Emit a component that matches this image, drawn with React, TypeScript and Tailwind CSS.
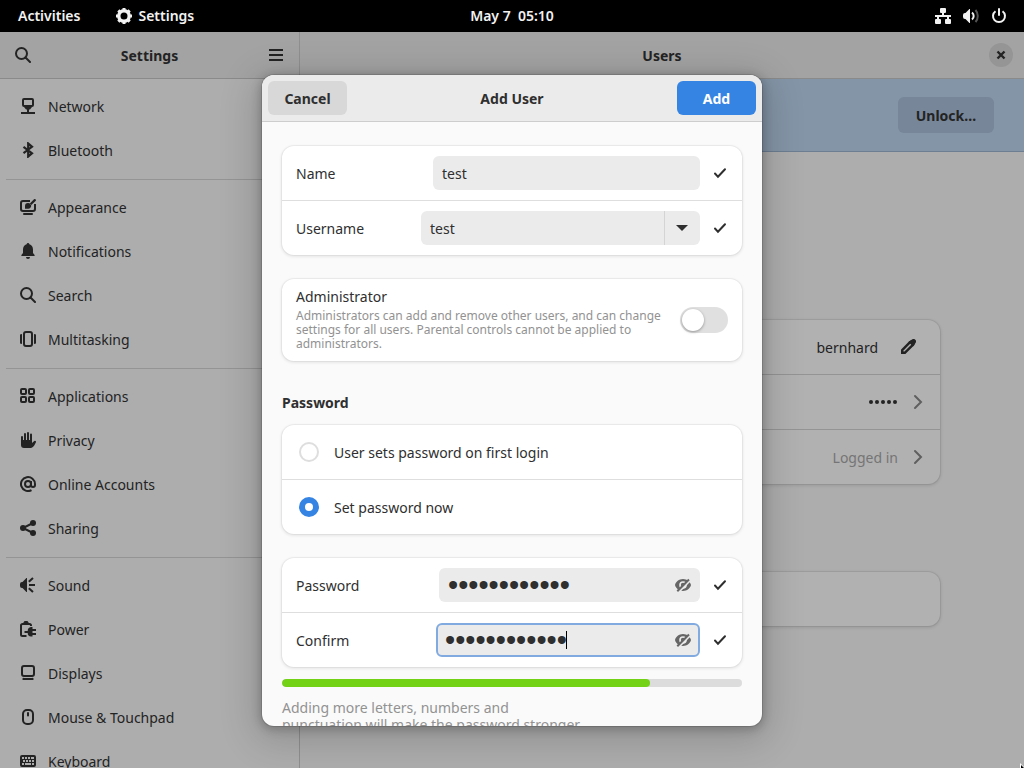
import type { ReactNode } from "react";

type IconProps = { children: ReactNode; className?: string };

function Icon({ children, className = "" }: IconProps) {
  return (
    <svg viewBox="0 0 16 16" width="16" height="16" fill="currentColor" aria-hidden="true" className={"shrink-0 " + className}>
      {children}
    </svg>
  );
}

const stroke = { fill: "none", stroke: "currentColor", strokeWidth: 2 } as const;

const NetworkIcon = () => (
  <Icon>
    <rect x="3" y="1" width="10" height="7" rx="1" {...stroke} />
    <path d="M4 9h8l-2 2.500H9V14h6v2H1v-2h6v-2.500H6z" />
  </Icon>
);
const BluetoothIcon = () => (
  <Icon>
    <path d="M3.500 4.800 12 11.200 8.200 14.500V1.500L12 4.800 3.500 11.200" fill="none" stroke="currentColor" strokeWidth="2.200" />
  </Icon>
);
const AppearanceIcon = () => (
  <Icon>
    <path d="M10 2H3a2 2 0 0 0-2 2v6a2 2 0 0 0 2 2h10a2 2 0 0 0 2-2V5" {...stroke} />
    <rect x="3" y="14" width="10" height="2" rx="1" />
    <path d="M5 9.500V7a3 3 0 0 1 3-3l1.500.3 1.700 2A3 3 0 0 1 8 9.700H5z" />
    <path d="M9.800 4.500 14 .3A1.200 1.200 0 0 1 15.800 1.800L11.300 6z" />
  </Icon>
);
const BellIcon = () => (
  <Icon>
    <path d="M8 0a1.500 1.500 0 0 1 1.400 1.200C11.800 2 13 3.900 13 6.500V10l1.600 2v1H1.400v-1L3 10V6.500C3 3.900 4.200 2 6.600 1.200A1.500 1.500 0 0 1 8 0z" />
    <path d="M6 14h4a2 2 0 0 1-4 0z" />
  </Icon>
);
const SearchIcon = () => (
  <Icon>
    <circle cx="6.500" cy="6.500" r="5.500" {...stroke} />
    <path d="m10.500 10.500 4.500 4.500" {...stroke} strokeLinecap="round" />
  </Icon>
);
const MultitaskingIcon = () => (
  <Icon>
    <rect x="4" y="1" width="8" height="14" rx="2" {...stroke} />
    <path d="M0 3.500 2 3v10l-2-.5zM16 3.500 14 3v10l2-.5z" />
  </Icon>
);
const ApplicationsIcon = () => (
  <Icon>
    <g {...stroke}>
      <rect x="1" y="1" width="5" height="5" rx="1" />
      <rect x="9" y="1" width="5" height="5" rx="1" />
      <rect x="1" y="9" width="5" height="5" rx="1" />
      <rect x="9" y="9" width="5" height="5" rx="1" />
    </g>
  </Icon>
);
const HandIcon = () => (
  <Icon>
    <path d="M1 5a1 1 0 0 1 2 0v3h1V2a1 1 0 0 1 2 0v6h1V1a1 1 0 0 1 2 0v7h1V2.500a1 1 0 0 1 2 0V11l2.300-1.900a1 1 0 0 1 1.500 1.300C14.500 13 13.300 16 10 16H4a3 3 0 0 1-3-3z" />
  </Icon>
);
const AtIcon = () => (
  <Icon>
    <circle cx="8" cy="8" r="3" {...stroke} />
    <path d="M11 5v4a2 2 0 0 0 4 0V8a7 7 0 1 0-3.500 6.100" {...stroke} />
  </Icon>
);
const ShareIcon = () => (
  <Icon>
    <circle cx="3" cy="8" r="3" />
    <circle cx="13" cy="3" r="3" />
    <circle cx="13" cy="13" r="3" />
    <path d="M13 3 3 8l10 5" {...stroke} />
  </Icon>
);
const SoundIcon = () => (
  <Icon>
    <path d="M7 1v14h-.600L2.500 11H2a2 2 0 0 1-2-2V7a2 2 0 0 1 2-2h.500l3.900-4z" />
    <path d="M9 8h6M8.800 4.800 13 .900M8.800 11.200 13 15.100" {...stroke} />
  </Icon>
);
const PowerSettingsIcon = () => (
  <Icon>
    <path d="M6.500 15H2.500A1.500 1.500 0 0 1 1 13.500v-9A1.500 1.500 0 0 1 2.500 3h7A1.500 1.500 0 0 1 11 4.500V5" {...stroke} />
    <path d="M3.500 2.500V1.500L4.500 0h3l1 1.500v1z" />
    <path d="M12.500 6v9.500H11A3.500 3.500 0 0 1 7.700 12H4.500v-2h3.200A4 4 0 0 1 11 6zM12.500 8H16v2h-3.500zM12.500 12H16v2h-3.500z" />
  </Icon>
);
const DisplayIcon = () => (
  <Icon>
    <rect x="2" y="1" width="12" height="10" rx="2" {...stroke} />
    <path d="M4 13h8a1 1 0 0 1 1 2H3a1 1 0 0 1 1-2z" />
  </Icon>
);
const MouseIcon = () => (
  <Icon>
    <rect x="3" y="1" width="10" height="14" rx="4" {...stroke} />
    <path d="M8 4v2.500" {...stroke} strokeLinecap="round" />
  </Icon>
);
const KeyboardIcon = () => (
  <Icon>
    <path
      fillRule="evenodd"
      d="M2 2h12a2 2 0 0 1 2 2v8a2 2 0 0 1-2 2H2a2 2 0 0 1-2-2V4a2 2 0 0 1 2-2zM2 4v2h2V4zM5 4v2h2V4zM8 4v2h2V4zM11 4v2h3V4zM3 7v2h2V7zM6 7v2h2V7zM9 7v2h2V7zM12 7v2h2V7zM2 10v2h2v-2zM5 10v2h6v-2zM12 10v2h2v-2z"
    />
  </Icon>
);
const GearIcon = () => (
  <Icon>
    <circle cx="8" cy="8" r="5.200" fill="none" stroke="currentColor" strokeWidth="3.400" />
    <path
      d="M8 0v3M8 13v3M0 8h3M13 8h3M2.340 2.340l2 2M11.660 11.660l2 2M13.660 2.340l-2 2M4.340 11.660l-2 2"
      fill="none"
      stroke="currentColor"
      strokeWidth="3"
    />
  </Icon>
);
const WiredIcon = () => (
  <Icon>
    <rect x="5" y="0" width="6" height="5" rx="1" />
    <rect x="0" y="11" width="6" height="5" rx="1" />
    <rect x="10" y="11" width="6" height="5" rx="1" />
    <path d="M8 4v4M3 12V8M13 12V8M0 8h16" {...stroke} />
  </Icon>
);
const VolumeIcon = () => (
  <Icon>
    <path d="M7 1v14h-.600L2.500 11H2a2 2 0 0 1-2-2V7a2 2 0 0 1 2-2h.500l3.900-4z" />
    <path d="M9 4.500a4.500 4.500 0 0 1 0 7" {...stroke} />
    <path d="M12.500 2a9 9 0 0 1 0 12" {...stroke} opacity="0.350" />
  </Icon>
);
const PowerIcon = () => (
  <Icon>
    <path d="M4.500 3.200a6 6 0 1 0 7 0" {...stroke} />
    <path d="M8 1v6" {...stroke} strokeLinecap="round" />
  </Icon>
);
const CheckIcon = () => (
  <Icon>
    <path d="m3 8.500 3 3.300 7-7.500" {...stroke} strokeLinecap="round" />
  </Icon>
);
const PencilIcon = () => (
  <Icon>
    <path d="M2.200 13.800v-2.600l8.100-8.300a2 2 0 0 1 2.800 2.800L4.800 13.800z" {...stroke} strokeWidth={2.4} strokeLinejoin="round" />
    <path d="m8.500 3 3.500-2.500a2.500 2.500 0 0 1 3.500 3.500L13 7.500zM1 10.500l4.500 4.500H1z" />
  </Icon>
);
const ChevronIcon = () => (
  <Icon className="text-[#5f5f5f]">
    <path d="m5 2 6 6-6 6" {...stroke} strokeLinecap="round" />
  </Icon>
);
const HiddenIcon = () => (
  <Icon>
    <path
      fillRule="evenodd"
      d="M8 2c4 0 7.300 2.900 8 6-.700 3.100-4 6-8 6S.7 11.100 0 8c.700-3.100 4-6 8-6zM8 4.200a3.800 3.800 0 1 0 0 7.600 3.800 3.800 0 0 0 0-7.600z"
    />
    <circle cx="8" cy="8" r="2.200" />
    <path d="M3.600 14.400 15 3" fill="none" stroke="#ebebeb" strokeWidth="3" />
    <path d="M2.300 14.200 14 2.500" {...stroke} />
  </Icon>
);

const groups = [
  [
    { label: "Network", Glyph: NetworkIcon },
    { label: "Bluetooth", Glyph: BluetoothIcon },
  ],
  [
    { label: "Appearance", Glyph: AppearanceIcon },
    { label: "Notifications", Glyph: BellIcon },
    { label: "Search", Glyph: SearchIcon },
    { label: "Multitasking", Glyph: MultitaskingIcon },
  ],
  [
    { label: "Applications", Glyph: ApplicationsIcon },
    { label: "Privacy", Glyph: HandIcon },
    { label: "Online Accounts", Glyph: AtIcon },
    { label: "Sharing", Glyph: ShareIcon },
  ],
  [
    { label: "Sound", Glyph: SoundIcon },
    { label: "Power", Glyph: PowerSettingsIcon },
    { label: "Displays", Glyph: DisplayIcon },
    { label: "Mouse & Touchpad", Glyph: MouseIcon },
    { label: "Keyboard", Glyph: KeyboardIcon },
  ],
];

function TopBar() {
  return (
    <header className="grid h-8 shrink-0 grid-cols-3 items-center bg-black pb-px font-semibold text-[#f2f2f2]">
      <div className="flex items-center gap-9 pl-[18px]">
        <button type="button">Activities</button>
        <button type="button" className="flex items-center gap-1.5">
          <GearIcon />
          Settings
        </button>
      </div>
      <button type="button" className="justify-self-center whitespace-pre">
        May 7{"  "}05:10
      </button>
      <div className="flex items-center justify-end gap-3 pr-[17px]">
        <WiredIcon />
        <VolumeIcon />
        <PowerIcon />
      </div>
    </header>
  );
}

function Sidebar() {
  return (
    <aside className="flex w-[300px] shrink-0 flex-col border-r border-[#8f8f8f]">
      <div className="flex h-[47px] shrink-0 items-center justify-between border-b border-[#8a8a8a] bg-[#a3a3a3] px-[15px]">
        <button type="button" aria-label="Search settings">
          <SearchIcon />
        </button>
        <h1 className="font-bold">Settings</h1>
        <button type="button" aria-label="Main menu">
          <Icon>
            <path d="M1 2h14v2H1zM1 7h14v2H1zM1 12h14v2H1z" />
          </Icon>
        </button>
      </div>
      <nav className="min-h-0 flex-1 overflow-hidden p-1.5">
        {groups.map((items, index) => (
          <ul key={index} className={index > 0 ? "mt-1.5 border-t border-[#949494] pt-1.5" : ""}>
            {items.map(({ label, Glyph }) => (
              <li key={label}>
                <a href="#" className="flex h-11 items-center gap-3 px-3.5 pb-0.5">
                  <Glyph />
                  {label}
                </a>
              </li>
            ))}
          </ul>
        ))}
      </nav>
    </aside>
  );
}

function UsersPanel() {
  return (
    <main className="flex min-w-0 flex-1 flex-col">
      <div className="grid h-[47px] shrink-0 grid-cols-[1fr_auto_1fr] items-center border-b border-[#8a8a8a] bg-[#a3a3a3] px-[11px]">
        <h2 className="col-start-2 font-bold">Users</h2>
        <button type="button" aria-label="Close" className="flex size-6 items-center justify-center justify-self-end rounded-full bg-[#959595]">
          <Icon>
            <path d="m4.500 4.500 7 7M11.500 4.500l-7 7" {...stroke} strokeWidth={2.4} />
          </Icon>
        </button>
      </div>
      <div className="flex h-[73px] shrink-0 items-center justify-end border-b border-[#6d7e93] bg-[#8495a7] pr-[30px]">
        <button type="button" className="h-9 w-24 rounded-md bg-[#778699] font-bold">
          Unlock…
        </button>
      </div>
      <div className="mx-auto w-full max-w-[556px] pt-[168px]">
        <div className="divide-y divide-[#949494] rounded-xl bg-[#b1b1b1] shadow-[0_0_0_1px_rgba(0,0,0,0.06),0_1px_3px_1px_rgba(0,0,0,0.1)]">
          <div className="flex h-[55px] items-center justify-end gap-[22px] pr-6">
            bernhard
            <PencilIcon />
          </div>
          <div className="flex h-[55px] items-center justify-end gap-3 pr-3.5">
            <svg viewBox="0 0 30 6" width="30" height="6" fill="currentColor" role="img" aria-label="Password set">
              <circle cx="3" cy="3" r="2" />
              <circle cx="9" cy="3" r="2" />
              <circle cx="15" cy="3" r="2" />
              <circle cx="21" cy="3" r="2" />
              <circle cx="27" cy="3" r="2" />
            </svg>
            <ChevronIcon />
          </div>
          <div className="flex h-[54px] items-center justify-end gap-3 pr-3.5 text-[#757575]">
            Logged in
            <ChevronIcon />
          </div>
        </div>
        <div className="mt-[88px] h-[54px] rounded-xl bg-[#b1b1b1] shadow-[0_0_0_1px_rgba(0,0,0,0.06),0_1px_3px_1px_rgba(0,0,0,0.1)]" />
      </div>
    </main>
  );
}

function Card({ children }: { children: ReactNode }) {
  return (
    <div className="divide-y divide-[#dedede] rounded-xl bg-white shadow-[0_0_0_1px_rgba(0,0,0,0.04),0_1px_3px_1px_rgba(0,0,0,0.08)]">
      {children}
    </div>
  );
}

function FieldRow({ id, label, children }: { id: string; label: string; children: ReactNode }) {
  return (
    <div className="flex h-[55px] items-center px-3.5 last:h-[54px]">
      <label htmlFor={id} className="flex-1">
        {label}
      </label>
      {children}
      <span className="ml-3">
        <CheckIcon />
      </span>
    </div>
  );
}

const secret = "correcthorse";

function AddUserDialog() {
  return (
    <div className="absolute inset-x-0 top-8 bottom-0 flex justify-center pt-[43px] pb-[42px]">
      <section
        role="dialog"
        aria-label="Add User"
        className="flex w-full max-w-[500px] flex-col overflow-hidden rounded-xl bg-[#fafafa] text-[#2f2f2f] shadow-[0_0_0_1px_rgba(0,0,0,0.12),0_2px_10px_2px_rgba(0,0,0,0.2),0_8px_36px_8px_rgba(0,0,0,0.16)]"
      >
        <div className="grid h-[47px] shrink-0 grid-cols-[1fr_auto_1fr] items-center border-b border-[#cdcdcd] bg-[#ebebeb] px-1.5 font-bold">
          <button type="button" className="h-[34px] w-[79px] rounded-md bg-[#d8d8d8]">
            Cancel
          </button>
          <h2>Add User</h2>
          <button type="button" className="h-[34px] w-[79px] justify-self-end rounded-md bg-[#3584e4] text-white">
            Add
          </button>
        </div>
        <form className="min-h-0 flex-1 overflow-y-auto px-5 pt-6 [scrollbar-width:none]">
          <Card>
            <FieldRow id="name" label="Name">
              <input id="name" defaultValue="test" className="h-[34px] w-[267px] rounded-md bg-[#ebebeb] px-[9px]" />
            </FieldRow>
            <FieldRow id="username" label="Username">
              <div className="flex h-[34px] w-[279px] overflow-hidden rounded-md bg-[#ebebeb]">
                <input id="username" defaultValue="test" className="min-w-0 flex-1 px-[9px]" />
                <button type="button" aria-label="Choose username" className="flex w-9 items-center justify-center border-l border-[#d4d4d4] pr-px">
                  <Icon>
                    <path d="M2 5h12l-6 6z" />
                  </Icon>
                </button>
              </div>
            </FieldRow>
          </Card>

          <div className="mt-6">
            <Card>
              <div className="flex h-[82px] items-center justify-between px-3.5">
                <div className="w-[370px] pb-0.5">
                  <label htmlFor="admin" className="mb-0.5 block leading-5">
                    Administrator
                  </label>
                  <p className="text-[12px] leading-[14px] text-[#929292]">
                    Administrators can add and remove other users, and can change settings for all users. Parental controls cannot be applied to
                    administrators.
                  </p>
                </div>
                <input
                  id="admin"
                  type="checkbox"
                  role="switch"
                  className="h-[26px] w-12 shrink-0 appearance-none rounded-full bg-[#e0e0e0] p-0.5 before:block before:size-[22px] before:rounded-full before:bg-white before:shadow-[0_1px_3px_rgba(0,0,0,0.35)]"
                />
              </div>
            </Card>
          </div>

          <h3 className="mt-8 leading-5 font-bold">Password</h3>

          <div className="mt-3">
            <Card>
              <label className="flex h-[55px] items-center gap-[15px] px-[17px]">
                <input type="radio" name="mode" className="size-5 appearance-none rounded-full border-2 border-[#dedede]" />
                User sets password on first login
              </label>
              <label className="flex h-[54px] items-center gap-[15px] px-[17px]">
                <input
                  type="radio"
                  name="mode"
                  defaultChecked
                  className="size-5 appearance-none rounded-full border-[6px] border-[#3584e4] bg-white"
                />
                Set password now
              </label>
            </Card>
          </div>

          <div className="mt-6">
            <Card>
              <FieldRow id="password" label="Password">
                <div className="flex h-[34px] w-[261px] items-center rounded-md bg-[#ebebeb] px-[9px]">
                  <input
                    id="password"
                    type="password"
                    defaultValue={secret}
                    className="h-full min-w-0 flex-1 font-['Liberation_Sans',sans-serif] text-[29px]"
                  />
                  <button type="button" aria-label="Show password" className="text-[#666666]">
                    <HiddenIcon />
                  </button>
                </div>
              </FieldRow>
              <FieldRow id="confirm" label="Confirm">
                <div className="relative flex h-[34px] w-[264px] items-center rounded-md border-2 border-[#81aae0] bg-[#ebebeb] px-[7px]">
                  <input
                    id="confirm"
                    type="password"
                    defaultValue={secret}
                    className="h-full min-w-0 flex-1 font-['Liberation_Sans',sans-serif] text-[29px]"
                  />
                  <span className="absolute left-32 h-[18px] w-px bg-black" />
                  <button type="button" aria-label="Show password confirmation" className="text-[#666666]">
                    <HiddenIcon />
                  </button>
                </div>
              </FieldRow>
            </Card>
          </div>

          <div className="mt-3 h-2 overflow-hidden rounded-full bg-[#dcdcdc]" role="meter" aria-label="Password strength" aria-valuenow={80}>
            <div className="h-full w-4/5 rounded-full bg-[#73d216]" />
          </div>
          <p className="mt-3 w-[304px] leading-[17px] text-[#929292]">
            Adding more letters, numbers and punctuation will make the password stronger.
          </p>
        </form>
      </section>
    </div>
  );
}

export default function App() {
  return (
    <div className="relative flex h-screen flex-col overflow-hidden bg-[#adadad] font-['Noto_Sans',sans-serif] text-[14px] text-[#232323]">
      <TopBar />
      <div className="flex min-h-0 flex-1">
        <Sidebar />
        <UsersPanel />
      </div>
      <AddUserDialog />
      <svg viewBox="0 0 4 5" width="4" height="5" className="absolute right-0 bottom-0" aria-hidden="true">
        <path d="M0 0v5h4V4z" fill="#ffffff" />
        <path d="M1 2v3h3z" fill="#000000" />
      </svg>
    </div>
  );
}
